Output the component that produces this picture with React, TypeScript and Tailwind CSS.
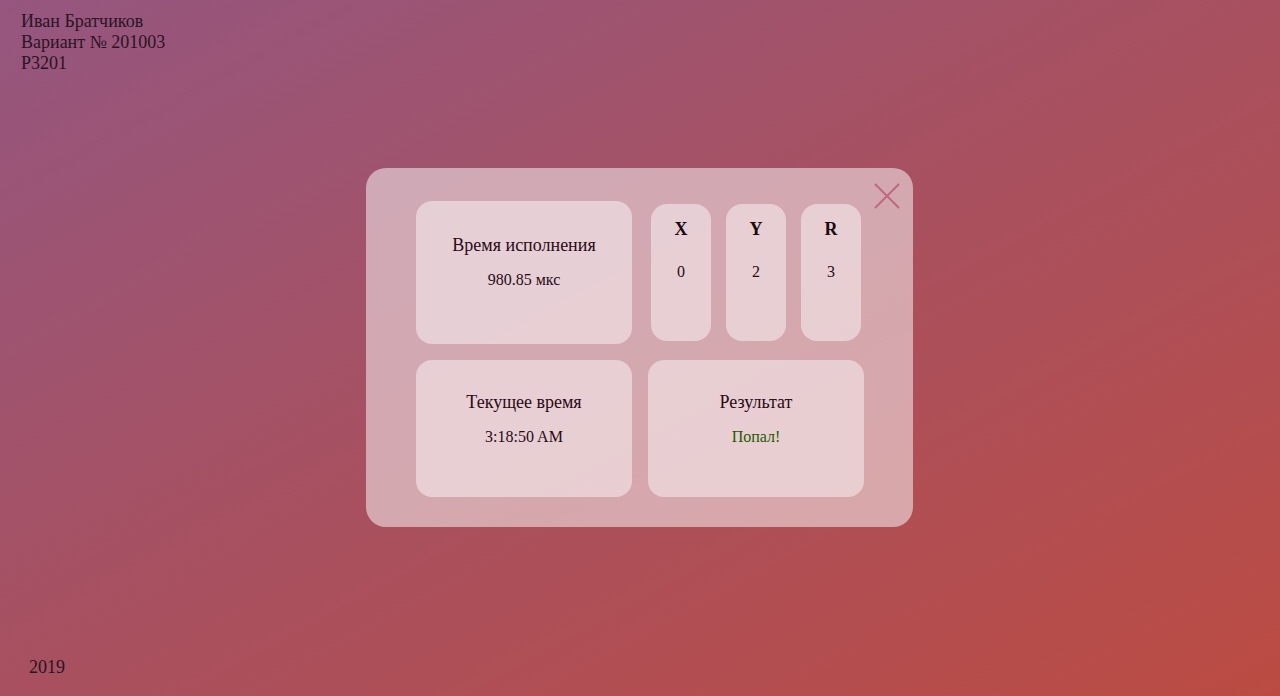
import React from "react";

const serif = "font-['Liberation_Serif','Times_New_Roman',serif]";

function InfoCard({
  title,
  value,
  valueClass = "text-[#2a0a16]",
  tall = false,
}: {
  title: string;
  value: string;
  valueClass?: string;
  tall?: boolean;
}) {
  return (
    <div
      className={`flex w-[216px] flex-col items-center rounded-[16px] bg-white/45 ${
        tall ? "h-[143px] pt-[33px]" : "h-[137px] pt-[31px]"
      }`}
    >
      <div className="text-[18px] leading-[22px] text-[#2a0a16]">{title}</div>
      <div className={`mt-[14px] text-[16px] leading-[20px] ${valueClass}`}>{value}</div>
    </div>
  );
}

function CoordCard({ label, value }: { label: string; value: string }) {
  return (
    <div className="flex h-[137px] w-[60px] flex-col items-center rounded-[16px] bg-white/45 pt-[14px]">
      <div className="text-[18px] leading-[22px] font-bold text-[#1a0a10]">{label}</div>
      <div className="mt-[22px] text-[16px] leading-[20px] text-[#2a0a16]">{value}</div>
    </div>
  );
}

export default function App() {
  return (
    <div
      className={`relative flex h-[696px] w-full flex-col bg-gradient-to-br from-[#95567f] via-[#a8505f] to-[#bb4b42] ${serif}`}
    >
      {/* HEADER */}
      <div className="px-[21px] pt-[11px] text-[18px] leading-[21px] text-[#2a1424]">
        <div>Иван Братчиков</div>
        <div>Вариант № 201003</div>
        <div>P3201</div>
      </div>

      {/* MODAL */}
      <div className="flex flex-1 items-start justify-center pt-[94px]">
        <div className="relative -ml-[1px] rounded-[20px] bg-white/50 pb-[30px] pl-[50px] pr-[49px] pt-[33px]">
          <button className="absolute right-[13px] top-[15px] h-[26px] w-[26px]">
            <svg viewBox="0 0 26 26" className="h-full w-full" stroke="#c0687e" strokeWidth="2" strokeLinecap="round">
              <line x1="1.5" y1="1.5" x2="24.5" y2="24.5" />
              <line x1="24.5" y1="1.5" x2="1.5" y2="24.5" />
            </svg>
          </button>

          <div className="grid grid-cols-[216px_216px] gap-x-[16px] gap-y-[16px]">
            <InfoCard title="Время исполнения" value="980.85 мкс" tall />
            <div className="flex justify-between px-[3px] pt-[3px]">
              <CoordCard label="X" value="0" />
              <CoordCard label="Y" value="2" />
              <CoordCard label="R" value="3" />
            </div>
            <InfoCard title="Текущее время" value="3:18:50 AM" />
            <InfoCard title="Результат" value="Попал!" valueClass="text-[#1f5a00]" />
          </div>
        </div>
      </div>

      {/* FOOTER */}
      <div className="px-[29px] pb-[18px] text-[18px] leading-[21px] text-[#2a1424]">2019</div>
    </div>
  );
}
